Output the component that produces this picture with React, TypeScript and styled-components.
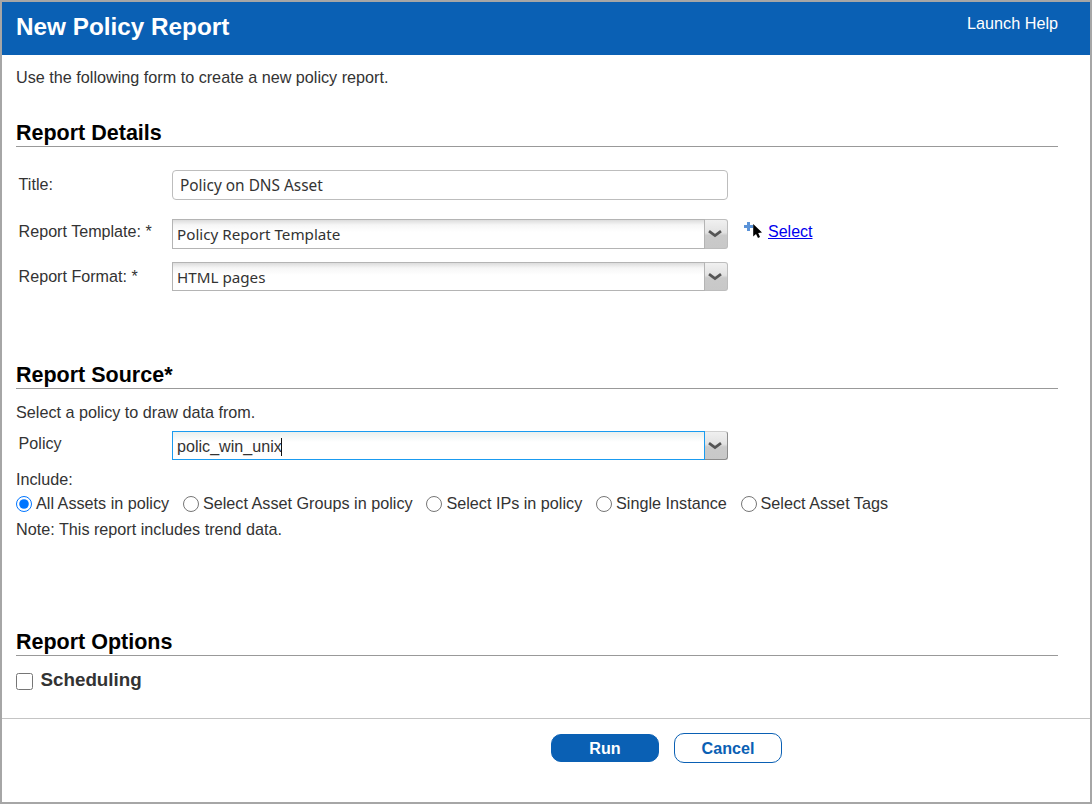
import React from "react";
import styled, { createGlobalStyle } from "styled-components";

const GlobalStyle = createGlobalStyle`
  html, body {
    margin: 0;
    padding: 0;
    background: #fff;
  }
  body {
    font-family: "Liberation Sans", Arial, sans-serif;
    color: #333;
  }
`;

const Frame = styled.div`
  box-sizing: border-box;
  width: 1092px;
  height: 804px;
  border: 2px solid #a6a6a6;
  display: flex;
  flex-direction: column;
`;

const Header = styled.header`
  height: 53px;
  flex-shrink: 0;
  background: #0a60b4;
  display: flex;
  justify-content: space-between;
  padding: 0 32px 0 14px;
`;

const HeaderTitle = styled.h1`
  margin: 0;
  font-size: 24.3px;
  line-height: 49px;
  font-weight: 700;
  color: #fff;
`;

const HelpLink = styled.a`
  font-size: 16.2px;
  line-height: 43px;
  color: #fff;
  text-decoration: none;
`;

const Body = styled.main`
  flex: 1;
  padding: 0 32px 0 14px;
`;

const Intro = styled.p`
  margin: 14px 0 0;
  height: 18px;
  font-size: 16.2px;
  line-height: 17px;
`;

const SectionTitle = styled.h2<{ $top: number }>`
  margin: ${(p) => p.$top}px 0 0;
  height: 29px;
  padding-top: 3px;
  box-sizing: border-box;
  border-bottom: 1px solid #999;
  font-size: 21.5px;
  line-height: 25px;
  font-weight: 700;
  color: #000;
`;

const FormGrid = styled.div<{ $top: number }>`
  margin-top: ${(p) => p.$top}px;
  display: grid;
  grid-template-columns: 156px 556px auto;
  align-items: start;
  justify-content: start;
`;

const Label = styled.label<{ $top?: number }>`
  font-size: 16.13px;
  line-height: 17px;
  padding: ${(p) => p.$top ?? 6}px 0 0 2.6px;
`;

const TextField = styled.div`
  box-sizing: border-box;
  height: 30px;
  margin-bottom: 19px;
  padding: 0 7px;
  border: 1px solid #bdbdbd;
  border-radius: 4px;
  font-family: "Noto Sans", sans-serif;
  font-size: 15.4px;
  line-height: 30px;
  color: #333;
`;

const Combo = styled.div<{ $bottom?: number; $height?: number }>`
  display: flex;
  height: ${(p) => p.$height ?? 30}px;
  margin-bottom: ${(p) => p.$bottom ?? 0}px;
`;

const ComboValue = styled.div`
  box-sizing: border-box;
  flex: 1;
  padding: 0 4px;
  border: 1px solid #b4b4b4;
  background: linear-gradient(#dcdcdc 0, #f6f6f6 5px, #fff 12px);
  font-family: "Noto Sans", sans-serif;
  font-size: 15.2px;
  line-height: 28px;
  color: #333;
`;

const FocusedValue = styled(ComboValue)`
  border-color: #1a9bf0;
  background: linear-gradient(#e9f0ee 0, #fff 10px);
  font-family: "Liberation Sans", Arial, sans-serif;
  font-size: 16.13px;
`;

const Caret = styled.span`
  display: inline-block;
  width: 1px;
  height: 18px;
  margin-left: -1px;
  background: #111;
  vertical-align: -4px;
`;

const ComboButton = styled.div`
  width: 23px;
  box-sizing: border-box;
  border: 1px solid #bdbdbd;
  border-left: 0;
  border-radius: 0 3px 3px 0;
  padding-right: 2px;
  background: linear-gradient(#f0f0f0 0, #e2e2e2 45%, #cacaca 55%, #c8c8c8 100%);
  display: flex;
  align-items: center;
  justify-content: center;
`;

const FocusedButton = styled(ComboButton)`
  border-color: #d0d0d0 #8c8c8c #8c8c8c;
`;

const SelectAction = styled.div`
  display: flex;
  align-items: flex-start;
  margin-left: 16px;
  padding-top: 3px;
`;

const SelectLink = styled.a`
  margin: 1px 0 0 3px;
  font-size: 16px;
  line-height: 18px;
  color: #0000ee;
  text-decoration: underline;
`;

const Line = styled.p<{ $top: number }>`
  margin: ${(p) => p.$top}px 0 0;
  height: 18px;
  font-size: 16.2px;
  line-height: 17px;
`;

const RadioRow = styled.div`
  display: flex;
  gap: 13.8px;
  margin-top: 6px;
  height: 18px;
`;

const RadioLabel = styled.label`
  display: flex;
  align-items: flex-start;
  font-size: 16.2px;
  line-height: 17px;
`;

const Radio = styled.input`
  width: 16px;
  height: 16px;
  margin: 1px 4px 0 0;
  accent-color: #0075ff;
`;

const CheckRow = styled.label`
  display: flex;
  align-items: center;
  margin-top: 12px;
  height: 24px;
`;

const Check = styled.input`
  width: 17px;
  height: 17px;
  margin: 3px 7.5px 0 0;
`;

const CheckText = styled.span`
  font-size: 18.8px;
  font-weight: 700;
  color: #333;
`;

const Footer = styled.footer`
  height: 84px;
  flex-shrink: 0;
  box-sizing: border-box;
  border-top: 1px solid #c4c4c4;
  display: flex;
  align-items: flex-start;
  justify-content: center;
  gap: 15px;
  padding: 14px 0 0 240px;
`;

const Button = styled.button`
  width: 108px;
  height: 30px;
  box-sizing: border-box;
  border-radius: 10px;
  border: 1px solid #0a60b4;
  background: #fff;
  color: #0a60b4;
  font-family: "Liberation Sans", Arial, sans-serif;
  font-size: 16.13px;
  font-weight: 700;
  padding: 0 0 0 1px;
`;

const PrimaryButton = styled(Button)`
  height: 28px;
  margin-top: 1px;
  background: #0a60b4;
  color: #fff;
`;

const Chevron = () => (
  <svg width="14" height="8" viewBox="0 0 14 8">
    <path d="M1 1.2 L7 5.6 L13 1.2" fill="none" stroke="#555" strokeWidth="2.8" />
  </svg>
);

const SelectCursor = () => (
  <svg width="21" height="19" viewBox="0 0 21 19">
    <path d="M3 0 h3 v3 h3 v3 h-3 v3 h-3 v-3 h-3 v-3 h3 z" fill="#5b93d8" />
    <path d="M9.2 2 L9.2 14.5 L12 12 L14 16 L16 15 L14.2 11 L18 10.5 Z" fill="#000" />
  </svg>
);

const radios = [
  { label: "All Assets in policy", checked: true },
  { label: "Select Asset Groups in policy" },
  { label: "Select IPs in policy" },
  { label: "Single Instance" },
  { label: "Select Asset Tags" },
];

export default function App() {
  return (
    <>
      <GlobalStyle />
      <Frame>
        <Header>
          <HeaderTitle>New Policy Report</HeaderTitle>
          <HelpLink>Launch Help</HelpLink>
        </Header>
        <Body>
          <Intro>Use the following form to create a new policy report.</Intro>
          <SectionTitle $top={31}>Report Details</SectionTitle>
          <FormGrid $top={23}>
            <Label>Title:</Label>
            <TextField>Policy on DNS Asset</TextField>
            <span />
            <Label $top={4}>Report Template: *</Label>
            <Combo $bottom={13}>
              <ComboValue>Policy Report Template</ComboValue>
              <ComboButton>
                <Chevron />
              </ComboButton>
            </Combo>
            <SelectAction>
              <SelectCursor />
              <SelectLink href="#">Select</SelectLink>
            </SelectAction>
            <Label>Report Format: *</Label>
            <Combo $height={29}>
              <ComboValue>HTML pages</ComboValue>
              <ComboButton>
                <Chevron />
              </ComboButton>
            </Combo>
          </FormGrid>
          <SectionTitle $top={69}>Report Source*</SectionTitle>
          <Line $top={15}>Select a policy to draw data from.</Line>
          <FormGrid $top={9}>
            <Label $top={4}>Policy</Label>
            <Combo $height={29}>
              <FocusedValue>
                polic_win_unix
                <Caret />
              </FocusedValue>
              <FocusedButton>
                <Chevron />
              </FocusedButton>
            </Combo>
          </FormGrid>
          <Line $top={11}>Include:</Line>
          <RadioRow>
            {radios.map((r) => (
              <RadioLabel key={r.label}>
                <Radio type="radio" name="include" defaultChecked={r.checked} />
                {r.label}
              </RadioLabel>
            ))}
          </RadioRow>
          <Line $top={8}>Note: This report includes trend data.</Line>
          <SectionTitle $top={88}>Report Options</SectionTitle>
          <CheckRow>
            <Check type="checkbox" />
            <CheckText>Scheduling</CheckText>
          </CheckRow>
        </Body>
        <Footer>
          <PrimaryButton>Run</PrimaryButton>
          <Button>Cancel</Button>
        </Footer>
      </Frame>
    </>
  );
}
